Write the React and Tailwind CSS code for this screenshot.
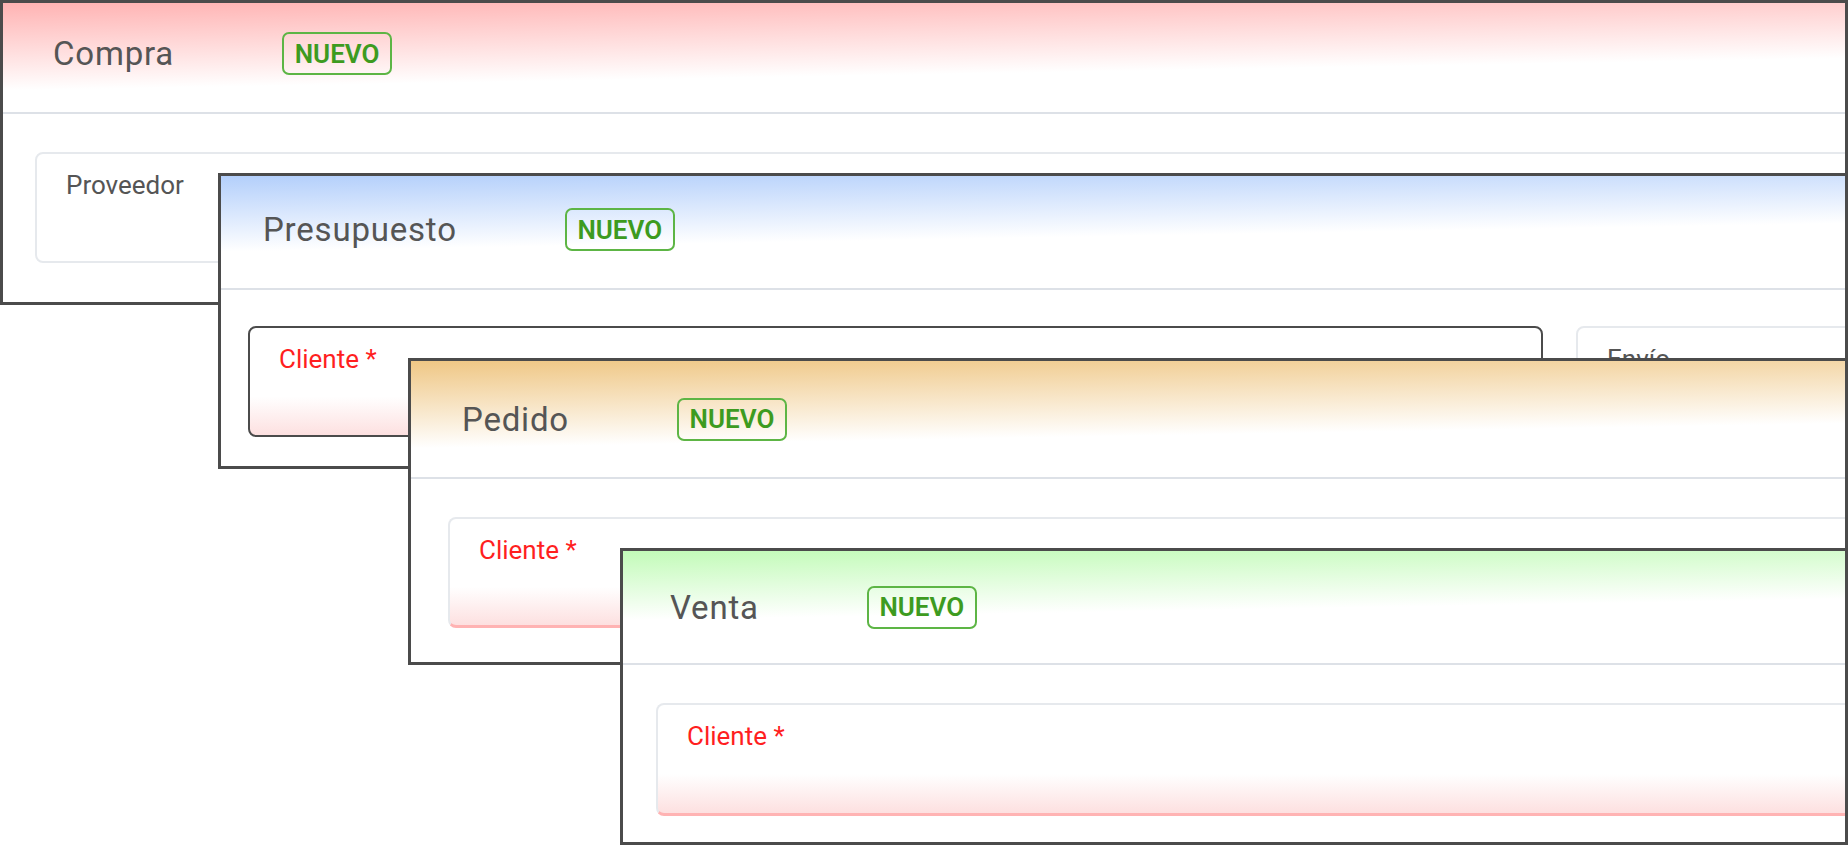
import React from "react";

function Badge() {
  return (
    <div className="flex h-[43px] w-[110px] shrink-0 items-center justify-center rounded-[7px] border-2 border-[#5db545] text-[26px] font-semibold leading-none text-[#3d9b1f]">
      NUEVO
    </div>
  );
}

function Title({ children }) {
  return <span className="shrink-0 text-[33px] leading-none tracking-[0.8px] text-[#555]">{children}</span>;
}

function Label({ children, red }) {
  return (
    <div className={red ? "text-[26px] leading-[30px] text-[#ff1f1f]" : "text-[26px] leading-[30px] text-[#555]"}>
      {children}
    </div>
  );
}

export default function App() {
  return (
    <div className="relative h-[845px] w-[1848px] overflow-hidden bg-white font-['Roboto',sans-serif]">
      {/* Compra */}
      <div className="absolute left-0 right-0 top-0 h-[305px] overflow-hidden border-[3px] border-[#4b4b4b] bg-white">
        <div className="flex h-[111px] items-center gap-[108px] border-b-2 border-[#dde1e7] bg-[linear-gradient(179deg,#ffb3b3_0%,#ffffff_62%)] pb-[8px] pl-[50px]">
          <Title>Compra</Title>
          <Badge />
        </div>
        <div className="pl-[32px] pt-[38px]">
          <div className="-mr-[20px] h-[111px] rounded-lg border-2 border-[#e6e9ed] pl-[29px] pt-[16px]">
            <Label>Proveedor</Label>
          </div>
        </div>
      </div>

      {/* Presupuesto */}
      <div className="absolute left-[218px] right-0 top-[173px] h-[296px] overflow-hidden border-[3px] border-[#4b4b4b] bg-white">
        <div className="flex h-[114px] items-center gap-[108px] border-b-2 border-[#dde1e7] bg-[linear-gradient(179deg,#b3cffb_0%,#ffffff_54%)] pb-[5px] pl-[42px]">
          <Title>Presupuesto</Title>
          <Badge />
        </div>
        <div className="flex gap-[33px] pl-[27px] pt-[36px]">
          <div className="h-[111px] w-[1295px] shrink-0 rounded-lg border-2 border-[#4b4b4b] bg-[linear-gradient(to_bottom,#ffffff_64%,#fde0e0_100%)] pl-[29px] pt-[16px]">
            <Label red>Cliente *</Label>
          </div>
          <div className="-mr-[20px] h-[111px] flex-1 rounded-lg border-2 border-[#e6e9ed] pl-[29px] pt-[16px]">
            <Label>Envío</Label>
          </div>
        </div>
      </div>

      {/* Pedido */}
      <div className="absolute left-[408px] right-0 top-[358px] h-[307px] overflow-hidden border-[3px] border-[#4b4b4b] bg-white">
        <div className="flex h-[118px] items-center gap-[108px] border-b-2 border-[#dde1e7] bg-[linear-gradient(179deg,#efc785_0%,#ffffff_62%)] pl-[51px]">
          <Title>Pedido</Title>
          <Badge />
        </div>
        <div className="pl-[37px] pt-[38px]">
          <div className="-mr-[20px] h-[111px] rounded-lg border-2 border-b-[3px] border-[#e6e9ed] border-b-[#ffb3b3] bg-[linear-gradient(to_bottom,#ffffff_64%,#fde0e0_100%)] pl-[29px] pt-[16px]">
            <Label red>Cliente *</Label>
          </div>
        </div>
      </div>

      {/* Venta */}
      <div className="absolute bottom-0 left-[620px] right-0 top-[548px] overflow-hidden border-[3px] border-[#4b4b4b] bg-white">
        <div className="flex h-[114px] items-center gap-[108px] border-b-2 border-[#dde1e7] bg-[linear-gradient(179deg,#c2fbb8_0%,#ffffff_52%)] pl-[47px]">
          <Title>Venta</Title>
          <Badge />
        </div>
        <div className="pl-[33px] pt-[38px]">
          <div className="-mr-[20px] h-[113px] rounded-lg border-2 border-b-[3px] border-[#e6e9ed] border-b-[#ffb3b3] bg-[linear-gradient(to_bottom,#ffffff_64%,#fde0e0_100%)] pl-[29px] pt-[16px]">
            <Label red>Cliente *</Label>
          </div>
        </div>
      </div>
    </div>
  );
}
